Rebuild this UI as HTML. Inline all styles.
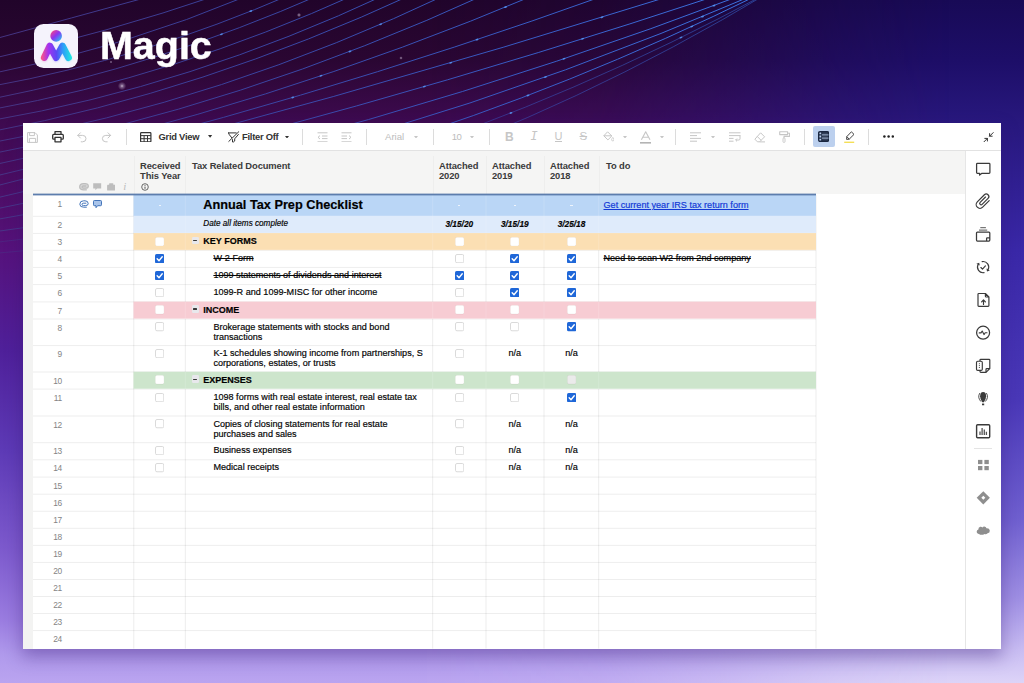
<!DOCTYPE html>
<html lang="en"><head><meta charset="utf-8"><title>Magic</title>
<style>
html,body{margin:0;padding:0}
body{width:1024px;height:683px;overflow:hidden;position:relative;font-family:"Liberation Sans",sans-serif;background:#2a0a40;}
.abs{position:absolute}
#bg{position:absolute;left:0;top:0;width:1024px;height:683px;
 background:linear-gradient(180deg,#180a56 0px,#1d0e68 60px,#28187e 123px,#3a28a8 250px,#4a38b8 400px,#7060d0 520px,#a090e4 600px,#c8bcf2 650px,#ddd4f8 683px);}
#bgl{position:absolute;left:0;top:0;width:1024px;height:683px;
 background:linear-gradient(180deg,#21042a 0px,#2a0632 60px,#3e0a50 123px,#4b0d62 180px,#56127c 250px,#4f209a 350px,#5d3ab6 450px,#7d5acd 550px,#9a7ce0 620px,#b09aec 655px,#baa4f0 683px);
 -webkit-mask-image:linear-gradient(90deg,#000 0px,#000 420px,rgba(0,0,0,.85) 600px,rgba(0,0,0,.55) 720px,rgba(0,0,0,.2) 840px,rgba(0,0,0,0) 950px);
 mask-image:linear-gradient(90deg,#000 0px,#000 420px,rgba(0,0,0,.85) 600px,rgba(0,0,0,.55) 720px,rgba(0,0,0,.2) 840px,rgba(0,0,0,0) 950px);}
#panel{position:absolute;left:23px;top:123px;width:978px;height:526px;background:#fff;box-shadow:0 7px 16px 1px rgba(50,20,110,.36)}
#toolbar{position:absolute;left:0;top:0;width:978px;height:27px;background:#fff;border-bottom:1px solid #e2e2e2;box-sizing:content-box}
#hdr{position:absolute;left:0;top:28px;width:942px;height:43px;background:#f5f5f4}
#gut{position:absolute;left:0;top:71px;width:10px;height:455px;background:#f3f3f2}
#side{position:absolute;left:942px;top:28px;width:36px;height:498px;background:#fff;border-left:1px solid #e6e6e6;box-sizing:border-box}
.h{position:absolute;font-weight:bold;font-size:9.4px;line-height:10.3px;color:#3b3b3b;white-space:nowrap;letter-spacing:-0.1px}
.tb{position:absolute;font-weight:bold;font-size:9.4px;line-height:12px;color:#333;white-space:nowrap;letter-spacing:-0.26px}
.tg{position:absolute;font-size:9.6px;line-height:12px;color:#bdbdbd;white-space:nowrap}
.sep{position:absolute;top:6px;width:1px;height:16px;background:#dcdcdc}
.rn{position:absolute;left:21.6px;width:40px;text-align:right;font-size:8.4px;line-height:10px;color:#848484;letter-spacing:-0.45px}
.t{position:absolute;font-size:9.08px;line-height:10.2px;color:#050505;white-space:nowrap;-webkit-text-stroke:0.18px #050505}
.s{text-decoration:line-through}
.g{font-weight:bold;font-size:9.0px;color:#000}
.c{position:absolute;width:40px;text-align:center;font-size:9.08px;line-height:10.2px;color:#050505;-webkit-text-stroke:0.18px #050505}
.hl{position:absolute;height:1px;background:#e9e9e9}
.vl{position:absolute;width:1px;background:#e6e6e6}
</style></head><body>
<div id="bg"></div><div id="bgl"></div>

<svg class="abs" style="left:0;top:0" width="1024" height="683" viewBox="0 0 1024 683">
<defs><linearGradient id="ln" gradientUnits="userSpaceOnUse" x1="0" y1="0" x2="760" y2="0"><stop offset="0" stop-color="#48388a"/><stop offset=".3" stop-color="#3c48a8"/><stop offset=".7" stop-color="#3a66d6"/><stop offset="1" stop-color="#4080f4"/></linearGradient></defs>
<g fill="none" stroke="url(#ln)" stroke-width="1" opacity="0.9">
<path d="M-8.0 39.7 Q71.5 17.9 151.0 -3.8"/>
<path d="M-8.0 58.6 Q106.0 33.3 220.0 -5.7"/>
<path d="M-8.0 73.6 Q121.8 48.4 251.5 -5.8"/>
<path d="M-8.0 86.2 Q142.0 59.0 292.0 -6.0"/>
<path d="M-8.0 98.9 Q157.0 66.3 322.0 -6.1"/>
<path d="M-8.0 109.5 Q174.5 76.5 357.0 -6.3"/>
<path d="M-8.0 120.4 Q190.0 86.3 388.0 -6.5"/>
<path d="M-8.0 131.5 Q203.0 91.5 414.0 -6.4"/>
<path d="M-8.0 142.6 Q221.5 101.6 451.0 -7.6"/>
<path d="M-8.0 153.7 Q240.5 107.0 489.0 -7.2"/>
<path d="M-8.0 165.2 Q265.5 108.6 539.0 -6.8"/>
<path d="M-8.0 176.9 Q300.5 104.9 609.0 -6.1"/>
<path d="M-8.0 187.0 Q333.2 102.3 674.5 -5.3"/>
<path d="M-8.0 199.0 Q356.5 115.3 721.0 -5.8"/>
<path d="M-8.0 209.7 Q368.5 137.3 745.0 -6.1"/>
<path d="M-8.0 220.3 Q374.3 158.8 756.6 -6.2"/>
<path d="M-8.0 232.1 Q377.0 182.8 762.0 -7.0"/>
<path d="M-8.0 242.8 Q380.0 202.1 768.0 -7.3" opacity=".5"/>
<path d="M-8.0 253.6 Q381.5 225.4 771.0 -8.7" opacity=".5"/>
</g>
<ellipse cx="250.8" cy="11.1" rx="1.5" ry="0.85" fill="#5b9af6" opacity=".8" transform="rotate(-18 250.8 11.1)"/>
<ellipse cx="221.5" cy="34.3" rx="1.5" ry="0.85" fill="#5b9af6" opacity=".8" transform="rotate(-18 221.5 34.3)"/>
<ellipse cx="380.7" cy="24.3" rx="1.5" ry="0.85" fill="#5b9af6" opacity=".8" transform="rotate(-18 380.7 24.3)"/>
<ellipse cx="350" cy="51.4" rx="1.5" ry="0.85" fill="#5b9af6" opacity=".8" transform="rotate(-18 350 51.4)"/>
<ellipse cx="321" cy="75.8" rx="1.5" ry="0.85" fill="#5b9af6" opacity=".8" transform="rotate(-18 321 75.8)"/>
<ellipse cx="292.8" cy="97.4" rx="1.5" ry="0.85" fill="#5b9af6" opacity=".8" transform="rotate(-18 292.8 97.4)"/>
<ellipse cx="505.5" cy="7.1" rx="1.5" ry="0.85" fill="#5b9af6" opacity=".8" transform="rotate(-18 505.5 7.1)"/>
<ellipse cx="477" cy="39.6" rx="1.5" ry="0.85" fill="#5b9af6" opacity=".8" transform="rotate(-18 477 39.6)"/>
<ellipse cx="450.8" cy="62.8" rx="1.5" ry="0.85" fill="#5b9af6" opacity=".8" transform="rotate(-18 450.8 62.8)"/>
<ellipse cx="424.4" cy="86.5" rx="1.5" ry="0.85" fill="#5b9af6" opacity=".8" transform="rotate(-18 424.4 86.5)"/>
<ellipse cx="582.6" cy="38.8" rx="1.5" ry="0.85" fill="#5b9af6" opacity=".8" transform="rotate(-18 582.6 38.8)"/>
<ellipse cx="564" cy="58.8" rx="1.5" ry="0.85" fill="#5b9af6" opacity=".8" transform="rotate(-18 564 58.8)"/>
<ellipse cx="545.5" cy="77.0" rx="1.5" ry="0.85" fill="#5b9af6" opacity=".8" transform="rotate(-18 545.5 77.0)"/>
<ellipse cx="528" cy="95.4" rx="1.5" ry="0.85" fill="#5b9af6" opacity=".8" transform="rotate(-18 528 95.4)"/>
<ellipse cx="511" cy="112.9" rx="1.5" ry="0.85" fill="#5b9af6" opacity=".8" transform="rotate(-18 511 112.9)"/>
<ellipse cx="602" cy="17.3" rx="1.5" ry="0.85" fill="#5b9af6" opacity=".8" transform="rotate(-18 602 17.3)"/>
<ellipse cx="714" cy="5.6" rx="1.5" ry="0.85" fill="#5b9af6" opacity=".8" transform="rotate(-18 714 5.6)"/>
<ellipse cx="702.5" cy="16.6" rx="1.5" ry="0.85" fill="#5b9af6" opacity=".8" transform="rotate(-18 702.5 16.6)"/>
<ellipse cx="691.8" cy="26.5" rx="1.5" ry="0.85" fill="#5b9af6" opacity=".8" transform="rotate(-18 691.8 26.5)"/>
<ellipse cx="681" cy="37.5" rx="1.5" ry="0.85" fill="#5b9af6" opacity=".8" transform="rotate(-18 681 37.5)"/>
<defs><radialGradient id="st"><stop offset="0" stop-color="#e8dcec" stop-opacity=".85"/><stop offset=".35" stop-color="#d0c0dc" stop-opacity=".45"/><stop offset="1" stop-color="#c0b0d0" stop-opacity="0"/></radialGradient></defs>
<circle cx="122" cy="86" r="4.2" fill="url(#st)"/>
<circle cx="299" cy="15" r="2.2" fill="url(#st)"/>
<circle cx="401" cy="58" r="1.8" fill="url(#st)"/>
<circle cx="111" cy="62" r="1.4" fill="url(#st)"/>
</svg>
<div class="abs" style="left:34.1px;top:23.8px;width:44.1px;height:44.1px;border-radius:9.5px;background:#f5f3fc"></div>
<svg class="abs" style="left:34.1px;top:23.8px" width="44.1" height="44.1" viewBox="0 0 44 44">
<defs><linearGradient id="lg" gradientUnits="userSpaceOnUse" x1="8" y1="0" x2="37" y2="0"><stop offset="0" stop-color="#f4528e"/><stop offset=".22" stop-color="#a432f0"/><stop offset=".5" stop-color="#5a48f4"/><stop offset=".72" stop-color="#2f9cf8"/><stop offset="1" stop-color="#1fe4e0"/></linearGradient>
<linearGradient id="lg2" x1="0.1" y1="0.1" x2="0.9" y2="0.95"><stop offset="0" stop-color="#f2408c"/><stop offset=".45" stop-color="#8a34f2"/><stop offset="1" stop-color="#22c8f2"/></linearGradient>
<filter id="gl" x="-20%" y="-20%" width="140%" height="150%"><feGaussianBlur stdDeviation="1.1"/></filter></defs>
<path d="M10.3 34.4 L15.8 22.6 L22.1 34.4 L28.4 22.6 L34.4 34.4" fill="none" stroke="url(#lg)" stroke-width="6" stroke-linecap="round" stroke-linejoin="round" opacity=".35" filter="url(#gl)"/>
<circle cx="22.1" cy="11.9" r="5.8" fill="url(#lg2)"/>
<path d="M10.3 33.5 L15.8 22 L22.1 33.5 L28.4 22 L34.4 33.5" fill="none" stroke="url(#lg)" stroke-width="6.8" stroke-linecap="round" stroke-linejoin="round"/>
</svg>
<div class="abs" style="left:100.3px;top:23.7px;font-weight:bold;font-size:38px;line-height:44px;color:#fff;transform:scaleX(1.038);transform-origin:0 0;white-space:nowrap;-webkit-text-stroke:0.5px #fff">Magic</div>

<div id="panel">
<div id="toolbar"></div><div id="hdr"></div><div id="gut"></div><div id="side"></div>
</div>
<svg class="abs" style="left:27px;top:131.5px" width="11" height="11" viewBox="0 0 11 11" ><path d="M0.6 0.6 H8 L10.4 3 V10.4 H0.6 Z M2.6 0.6 V3.6 H7.4 V0.6 M2.4 10.4 V6.4 H8.6 V10.4" fill="none" stroke="#c6c6c6" stroke-width="1"/></svg>
<svg class="abs" style="left:51.5px;top:131px" width="12" height="11.5" viewBox="0 0 12 11.5" ><path d="M3 3.4 V0.7 H9 V3.4 M3 8.2 H1.6 Q0.7 8.2 0.7 7.3 V4.4 Q0.7 3.4 1.6 3.4 H10.4 Q11.3 3.4 11.3 4.4 V7.3 Q11.3 8.2 10.4 8.2 H9 M3 6.4 H9 V10.8 H3 Z" fill="none" stroke="#333" stroke-width="1.3" stroke-linejoin="round"/></svg>
<svg class="abs" style="left:77px;top:131.5px" width="10" height="11" viewBox="0 0 10 11" ><path d="M0.8 3.4 H5.6 Q9 3.4 9 6.6 Q9 9.8 5.6 9.8 H4.2 M3.4 0.8 L0.8 3.4 L3.4 6" fill="none" stroke="#c6c6c6" stroke-width="1" stroke-linecap="round" stroke-linejoin="round"/></svg>
<svg class="abs" style="left:101px;top:131.5px" width="10.5" height="11" viewBox="0 0 10.5 11" ><path d="M9.6 3.4 H4.8 Q1.4 3.4 1.4 6.6 Q1.4 9.8 4.8 9.8 H6.2 M7 0.8 L9.6 3.4 L7 6" fill="none" stroke="#c6c6c6" stroke-width="1" stroke-linecap="round" stroke-linejoin="round"/></svg>
<div class="sep" style="left:126px;top:129px"></div>
<svg class="abs" style="left:140px;top:131.5px" width="11.5" height="10.5" viewBox="0 0 11.5 10.5" ><rect x="0.6" y="0.6" width="10.3" height="9.3" rx="0.8" fill="none" stroke="#333" stroke-width="1.2"/><path d="M0.6 3.6 H10.9 M0.6 6.7 H10.9 M4.1 3.6 V9.9 M7.5 3.6 V9.9" stroke="#333" stroke-width="1" fill="none"/></svg>
<div class="tb" style="left:158.5px;top:130.5px">Grid View</div>
<svg class="abs" style="left:208.4px;top:135px" width="4.2" height="2.8" viewBox="0 0 4.2 2.8" ><path d="M0 0 H4.2 L2.1 2.8 Z" fill="#333"/></svg>
<svg class="abs" style="left:228px;top:130.5px" width="11.5" height="12" viewBox="0 0 11.5 12" ><path d="M0.4 1.9 H8.2 M0.4 1.9 Q0.5 3.2 3.7 6.7 M10.4 3.5 L6.7 7.8 V10 Q5.8 11.3 4.5 11 V8.6" fill="none" stroke="#333" stroke-width="1" stroke-linecap="round" stroke-linejoin="round"/><path d="M0.8 10.4 L10.8 0.7" stroke="#333" stroke-width="1" stroke-linecap="round"/></svg>
<div class="tb" style="left:242px;top:130.5px">Filter Off</div>
<svg class="abs" style="left:284.5px;top:135.5px" width="4" height="2.6" viewBox="0 0 4 2.6" ><path d="M0 0 H4 L2 2.6 Z" fill="#333"/></svg>
<div class="sep" style="left:302px;top:129px"></div>
<svg class="abs" style="left:316.5px;top:131.5px" width="11" height="10.5" viewBox="0 0 11 10.5" ><path d="M0.5 0.8 H10.5 M5 4 H10.5 M5 6.6 H10.5 M0.5 9.8 H10.5 M3 3.6 L1 5.3 L3 7" fill="none" stroke="#c6c6c6" stroke-width="1"/></svg>
<svg class="abs" style="left:341px;top:131.5px" width="11" height="10.5" viewBox="0 0 11 10.5" ><path d="M0.5 0.8 H10.5 M0.5 4 H6 M0.5 6.6 H6 M0.5 9.8 H10.5 M8 3.6 L10 5.3 L8 7" fill="none" stroke="#c6c6c6" stroke-width="1"/></svg>
<div class="sep" style="left:366px;top:129px"></div>
<div class="tg" style="left:385px;top:130.5px">Arial</div>
<svg class="abs" style="left:413.5px;top:135.5px" width="4" height="2.6" viewBox="0 0 4 2.6" ><path d="M0 0 H4 L2 2.6 Z" fill="#c6c6c6"/></svg>
<div class="sep" style="left:432.5px;top:129px"></div>
<div class="tg" style="left:451.8px;top:130.5px;letter-spacing:-0.6px">10</div>
<svg class="abs" style="left:470px;top:135.5px" width="4" height="2.6" viewBox="0 0 4 2.6" ><path d="M0 0 H4 L2 2.6 Z" fill="#c6c6c6"/></svg>
<div class="sep" style="left:489px;top:129px"></div>
<div class="tg" style="left:505px;top:129.5px;font-size:12px;line-height:14px;font-weight:bold;color:#c6c6c6">B</div>
<div class="tg" style="left:530.2px;top:130.4px;font-size:12.4px;line-height:14px;font-style:italic;font-family:'Liberation Mono',monospace;color:#c6c6c6">I</div>
<div class="tg" style="left:554.5px;top:130px;font-size:11px;line-height:13px;color:#c6c6c6;border-bottom:1px solid #c6c6c6;height:11px">U</div>
<div class="tg" style="left:579.5px;top:130px;font-size:11.5px;line-height:13px;color:#c6c6c6;text-decoration:line-through">S</div>
<svg class="abs" style="left:602.5px;top:131px" width="11.5" height="11.5" viewBox="0 0 11.5 11.5" ><path d="M4.6 0.8 L8.8 5 L4.9 8.9 L0.8 4.8 Z M0.8 4.8 H8.6" fill="none" stroke="#c6c6c6" stroke-width="1" stroke-linejoin="round"/><path d="M9.8 6.4 Q11 8 11 8.8 Q11 9.9 9.8 9.9 Q8.6 9.9 8.6 8.8 Q8.6 8 9.8 6.4Z" fill="none" stroke="#c6c6c6" stroke-width="0.8"/></svg>
<svg class="abs" style="left:623px;top:135.5px" width="4" height="2.6" viewBox="0 0 4 2.6" ><path d="M0 0 H4 L2 2.6 Z" fill="#c6c6c6"/></svg>
<svg class="abs" style="left:639.5px;top:131px" width="11.5" height="13" viewBox="0 0 11.5 13" ><path d="M1.4 8.8 L5.7 0.8 L10 8.8 M2.8 6.2 H8.6" fill="none" stroke="#c6c6c6" stroke-width="1.1" stroke-linejoin="round"/><rect x="0" y="11" width="11.5" height="1.6" fill="#b4b4b4"/></svg>
<svg class="abs" style="left:659.5px;top:135.5px" width="4" height="2.6" viewBox="0 0 4 2.6" ><path d="M0 0 H4 L2 2.6 Z" fill="#c6c6c6"/></svg>
<div class="sep" style="left:675px;top:129px"></div>
<svg class="abs" style="left:690px;top:132px" width="11" height="10" viewBox="0 0 11 10" ><path d="M0 0.8 H11 M0 3.6 H7 M0 6.4 H11 M0 9.2 H7" fill="none" stroke="#c6c6c6" stroke-width="1"/></svg>
<svg class="abs" style="left:710.8px;top:135.5px" width="4" height="2.6" viewBox="0 0 4 2.6" ><path d="M0 0 H4 L2 2.6 Z" fill="#c6c6c6"/></svg>
<svg class="abs" style="left:729px;top:132px" width="11.5" height="10" viewBox="0 0 11.5 10" ><path d="M0 0.8 H11.5 M0 3.6 H11.5 M0 6.4 H4.5 M0 9.2 H4.5 M11 3.6 V6.8 Q11 8 9.8 8 H6.8 M8 6.6 L6.6 8 L8 9.4" fill="none" stroke="#c6c6c6" stroke-width="1"/></svg>
<svg class="abs" style="left:754px;top:131.5px" width="11.5" height="11" viewBox="0 0 11.5 11" ><path d="M6.6 0.8 L10.6 4.8 L5.6 9.8 H3.4 L0.9 7.2 Z M3.2 4.4 L7.2 8.4 M5.6 9.9 H11" fill="none" stroke="#c6c6c6" stroke-width="1" stroke-linejoin="round"/></svg>
<svg class="abs" style="left:778.5px;top:131px" width="11.5" height="12" viewBox="0 0 11.5 12" ><path d="M0.7 0.8 H8.6 V3.6 H0.7 Z M8.6 2.2 H10.6 V5.4 H5 V7" fill="none" stroke="#c6c6c6" stroke-width="1.1" stroke-linejoin="round"/><rect x="4" y="7" width="2" height="4.4" rx="0.8" fill="none" stroke="#c6c6c6" stroke-width="0.9"/></svg>
<div class="sep" style="left:803.5px;top:129px"></div>
<div class="abs" style="left:813px;top:126px;width:21.5px;height:21px;border-radius:2px;background:#bcd0ee"></div>
<svg class="abs" style="left:818.2px;top:131px" width="11.2" height="11" viewBox="0 0 11.2 11" ><rect x="0.7" y="0.7" width="9.8" height="9.6" rx="1.2" fill="none" stroke="#1a2740" stroke-width="1.4"/><path d="M0.7 3.9 H10.5 M0.7 7.1 H10.5 M3.8 0.7 V10.3" stroke="#1a2740" stroke-width="1.1" fill="none"/><rect x="3.8" y="0.7" width="6.7" height="9.6" fill="#1a2740" opacity="0.85"/><path d="M3.8 3.9 H10.5 M3.8 7.1 H10.5" stroke="#bcd0ee" stroke-width="0.9"/></svg>
<svg class="abs" style="left:843.5px;top:130.5px" width="11" height="12.5" viewBox="0 0 11 12.5" ><path d="M7.4 0.8 L10 3.4 L5.2 8.2 L2.6 8.4 L2.8 5.6 Z M2.8 5.6 L5.2 8.2" fill="none" stroke="#444" stroke-width="1" stroke-linejoin="round"/><rect x="0.2" y="10.6" width="10" height="1.5" fill="#f4df57"/></svg>
<div class="sep" style="left:868px;top:129px"></div>
<svg class="abs" style="left:882.5px;top:135.2px" width="11.5" height="3" viewBox="0 0 11.5 3" ><circle cx="1.4" cy="1.5" r="1.25" fill="#222"/><circle cx="5.6" cy="1.5" r="1.25" fill="#222"/><circle cx="9.8" cy="1.5" r="1.25" fill="#222"/></svg>
<svg class="abs" style="left:982.5px;top:131.5px" width="11" height="10.5" viewBox="0 0 11 10.5" ><path d="M10.2 0.6 L6.6 4.2 M6.6 1.6 V4.2 H9.2 M0.8 10 L4.4 6.4 M4.4 9 V6.4 H1.8" fill="none" stroke="#333" stroke-width="1" stroke-linecap="round" stroke-linejoin="round"/></svg>
<div class="h" style="left:140px;top:160.5px">Received<br>This Year</div>
<svg class="abs" style="left:140.5px;top:182.5px" width="8" height="8" viewBox="0 0 8 8" ><circle cx="4" cy="4" r="3.3" fill="none" stroke="#444" stroke-width="0.8"/><path d="M4 3.6 V5.8" stroke="#444" stroke-width="0.9"/><circle cx="4" cy="2.4" r="0.5" fill="#444"/></svg>
<div class="h" style="left:192px;top:160.5px">Tax Related Document</div>
<div class="h" style="left:439px;top:160.5px">Attached<br>2020</div>
<div class="h" style="left:492px;top:160.5px">Attached<br>2019</div>
<div class="h" style="left:550px;top:160.5px">Attached<br>2018</div>
<div class="h" style="left:606px;top:160.5px">To do</div>
<div class="vl" style="left:133.8px;top:156px;height:38px;background:#eeeeed"></div>
<div class="vl" style="left:185.3px;top:156px;height:38px;background:#eeeeed"></div>
<div class="vl" style="left:432.7px;top:156px;height:38px;background:#eeeeed"></div>
<div class="vl" style="left:486.0px;top:156px;height:38px;background:#eeeeed"></div>
<div class="vl" style="left:544.0px;top:156px;height:38px;background:#eeeeed"></div>
<div class="vl" style="left:598.7px;top:156px;height:38px;background:#eeeeed"></div>
<svg class="abs" style="left:79px;top:183.2px" width="10" height="7.6" viewBox="0 0 10 7.6" ><path d="M6.9 3 H4.4 Q3 3 3 4.1 Q3 5.2 4.4 5.2 H6.6 Q9.3 5.2 9.3 3.3 Q9.3 0.7 6 0.7 H4.6 Q0.7 0.7 0.7 3.9 Q0.7 6.8 4.6 6.8 H7.4" fill="#d9d9d9" stroke="#bdbdbd" stroke-width="1.3" stroke-linecap="round"/></svg>
<svg class="abs" style="left:93.4px;top:183.3px" width="8.4" height="7.6" viewBox="0 0 8.4 7.6" ><path d="M0.2 0.2 H8.2 V5.4 H4 L2.4 7.3 V5.4 H0.2 Z" fill="#bdbdbd"/></svg>
<svg class="abs" style="left:107px;top:183.3px" width="8.4" height="7.6" viewBox="0 0 8.4 7.6" ><rect x="0.1" y="1.7" width="8.2" height="5.7" rx="0.5" fill="#bdbdbd"/><rect x="2.1" y="0.2" width="4.2" height="2" rx="0.5" fill="#bdbdbd"/></svg>
<div class="abs" style="left:123.2px;top:180.6px;font-family:'Liberation Serif',serif;font-style:italic;font-size:11px;line-height:11px;color:#bdbdbd">i</div>
<svg class="abs" style="left:0;top:0" width="1024" height="683" viewBox="0 0 1024 683" shape-rendering="geometricPrecision"><rect x="133.30" y="195.30" width="1" height="453.30" fill="#000" opacity="0.075"/><rect x="184.80" y="195.30" width="1" height="453.30" fill="#000" opacity="0.075"/><rect x="432.20" y="195.30" width="1" height="453.30" fill="#000" opacity="0.075"/><rect x="485.50" y="195.30" width="1" height="453.30" fill="#000" opacity="0.075"/><rect x="543.50" y="195.30" width="1" height="453.30" fill="#000" opacity="0.075"/><rect x="598.20" y="195.30" width="1" height="453.30" fill="#000" opacity="0.075"/><rect x="815.50" y="195.30" width="1" height="453.30" fill="#000" opacity="0.075"/><rect x="33.0" y="215.80" width="783.0" height="1" fill="#000" opacity="0.07"/><rect x="33.0" y="232.90" width="783.0" height="1" fill="#000" opacity="0.07"/><rect x="33.0" y="249.80" width="783.0" height="1" fill="#000" opacity="0.07"/><rect x="33.0" y="266.90" width="783.0" height="1" fill="#000" opacity="0.07"/><rect x="33.0" y="284.10" width="783.0" height="1" fill="#000" opacity="0.07"/><rect x="33.0" y="301.40" width="783.0" height="1" fill="#000" opacity="0.07"/><rect x="33.0" y="318.50" width="783.0" height="1" fill="#000" opacity="0.07"/><rect x="33.0" y="345.10" width="783.0" height="1" fill="#000" opacity="0.07"/><rect x="33.0" y="371.50" width="783.0" height="1" fill="#000" opacity="0.07"/><rect x="33.0" y="388.60" width="783.0" height="1" fill="#000" opacity="0.07"/><rect x="33.0" y="415.50" width="783.0" height="1" fill="#000" opacity="0.07"/><rect x="33.0" y="442.20" width="783.0" height="1" fill="#000" opacity="0.07"/><rect x="33.0" y="459.30" width="783.0" height="1" fill="#000" opacity="0.07"/><rect x="33.0" y="476.60" width="783.0" height="1" fill="#000" opacity="0.07"/><rect x="33.0" y="493.70" width="783.0" height="1" fill="#000" opacity="0.07"/><rect x="33.0" y="510.75" width="783.0" height="1" fill="#000" opacity="0.07"/><rect x="33.0" y="527.80" width="783.0" height="1" fill="#000" opacity="0.07"/><rect x="33.0" y="544.85" width="783.0" height="1" fill="#000" opacity="0.07"/><rect x="33.0" y="561.90" width="783.0" height="1" fill="#000" opacity="0.07"/><rect x="33.0" y="578.95" width="783.0" height="1" fill="#000" opacity="0.07"/><rect x="33.0" y="596.00" width="783.0" height="1" fill="#000" opacity="0.07"/><rect x="33.0" y="613.05" width="783.0" height="1" fill="#000" opacity="0.07"/><rect x="33.0" y="630.10" width="783.0" height="1" fill="#000" opacity="0.07"/><rect x="133.50" y="195.00" width="682.50" height="21.10" fill="#bad6f6"/><rect x="184.80" y="195.30" width="1" height="21.00" fill="#fff" opacity="0.15"/><rect x="432.20" y="195.30" width="1" height="21.00" fill="#fff" opacity="0.15"/><rect x="485.50" y="195.30" width="1" height="21.00" fill="#fff" opacity="0.15"/><rect x="543.50" y="195.30" width="1" height="21.00" fill="#fff" opacity="0.15"/><rect x="598.20" y="195.30" width="1" height="21.00" fill="#fff" opacity="0.15"/><rect x="133.8" y="215.60" width="682.20" height="0.8" fill="#fff" opacity="0.3"/><rect x="133.50" y="216.00" width="682.50" height="17.20" fill="#dfebfb"/><rect x="184.80" y="216.30" width="1" height="17.10" fill="#fff" opacity="0.15"/><rect x="432.20" y="216.30" width="1" height="17.10" fill="#fff" opacity="0.15"/><rect x="485.50" y="216.30" width="1" height="17.10" fill="#fff" opacity="0.15"/><rect x="543.50" y="216.30" width="1" height="17.10" fill="#fff" opacity="0.15"/><rect x="598.20" y="216.30" width="1" height="17.10" fill="#fff" opacity="0.15"/><rect x="133.8" y="232.70" width="682.20" height="0.8" fill="#fff" opacity="0.3"/><rect x="133.50" y="233.10" width="682.50" height="17.00" fill="#fbdfb3"/><rect x="184.80" y="233.40" width="1" height="16.90" fill="#fff" opacity="0.15"/><rect x="432.20" y="233.40" width="1" height="16.90" fill="#fff" opacity="0.15"/><rect x="485.50" y="233.40" width="1" height="16.90" fill="#fff" opacity="0.15"/><rect x="543.50" y="233.40" width="1" height="16.90" fill="#fff" opacity="0.15"/><rect x="598.20" y="233.40" width="1" height="16.90" fill="#fff" opacity="0.15"/><rect x="133.8" y="249.60" width="682.20" height="0.8" fill="#fff" opacity="0.3"/><rect x="133.50" y="301.60" width="682.50" height="17.20" fill="#f7ccd3"/><rect x="184.80" y="301.90" width="1" height="17.10" fill="#fff" opacity="0.15"/><rect x="432.20" y="301.90" width="1" height="17.10" fill="#fff" opacity="0.15"/><rect x="485.50" y="301.90" width="1" height="17.10" fill="#fff" opacity="0.15"/><rect x="543.50" y="301.90" width="1" height="17.10" fill="#fff" opacity="0.15"/><rect x="598.20" y="301.90" width="1" height="17.10" fill="#fff" opacity="0.15"/><rect x="133.8" y="318.30" width="682.20" height="0.8" fill="#fff" opacity="0.3"/><rect x="133.50" y="371.70" width="682.50" height="17.20" fill="#cde5cc"/><rect x="184.80" y="372.00" width="1" height="17.10" fill="#fff" opacity="0.15"/><rect x="432.20" y="372.00" width="1" height="17.10" fill="#fff" opacity="0.15"/><rect x="485.50" y="372.00" width="1" height="17.10" fill="#fff" opacity="0.15"/><rect x="543.50" y="372.00" width="1" height="17.10" fill="#fff" opacity="0.15"/><rect x="598.20" y="372.00" width="1" height="17.10" fill="#fff" opacity="0.15"/><rect x="133.8" y="388.40" width="682.20" height="0.8" fill="#fff" opacity="0.3"/><rect x="33" y="193.6" width="783" height="1.8" fill="#5d7dad"/></svg>
<div class="rn" style="top:198.90px">1</div>
<div class="t" style="left:203.3px;top:197.80px;font-weight:bold;font-size:12.73px;line-height:14px;color:#000">Annual Tax Prep Checklist</div>
<a class="t" style="left:603.5px;top:200.30px;color:#1238d6;-webkit-text-stroke:0.18px #1238d6;text-decoration:underline;font-size:9.1px">Get current year IRS tax return form</a>
<div class="abs" style="left:158.6px;top:205.0px;width:2.4px;height:1px;background:#eef4fc"></div>
<div class="abs" style="left:458.1px;top:205.0px;width:2.4px;height:1px;background:#eef4fc"></div>
<div class="abs" style="left:513.6px;top:205.0px;width:2.4px;height:1px;background:#eef4fc"></div>
<div class="abs" style="left:570.3px;top:205.0px;width:2.4px;height:1px;background:#eef4fc"></div>
<svg class="abs" style="left:79px;top:200px" width="10" height="8" viewBox="0 0 10 8" ><path d="M6.9 3.2 H4.4 Q3 3.2 3 4.4 Q3 5.6 4.4 5.6 H6.6 Q9.2 5.6 9.2 3.6 Q9.2 0.8 6 0.8 H4.6 Q0.8 0.8 0.8 4.2 Q0.8 7.2 4.6 7.2 H7.4" fill="none" stroke="#3a6eb6" stroke-width="0.95" stroke-linecap="round"/></svg>
<svg class="abs" style="left:93.2px;top:200.2px" width="9" height="8.4" viewBox="0 0 9 8.4" ><path d="M1.4 0.5 H7.6 Q8.5 0.5 8.5 1.4 V4.8 Q8.5 5.7 7.6 5.7 H4.6 L3 7.7 V5.7 H1.4 Q0.5 5.7 0.5 4.8 V1.4 Q0.5 0.5 1.4 0.5 Z" fill="#a9c4ea" stroke="#3a6eb6" stroke-width="0.95" stroke-linejoin="round"/></svg>
<div class="rn" style="top:219.90px">2</div>
<div class="t" style="left:203.3px;top:219.10px;font-style:italic;font-size:8.17px">Date all items complete</div>
<div class="c" style="left:439.3px;top:218.60px;font-weight:bold;font-style:italic;font-size:8.3px;line-height:10.2px">3/15/20</div>
<div class="c" style="left:494.8px;top:218.60px;font-weight:bold;font-style:italic;font-size:8.3px;line-height:10.2px">3/15/19</div>
<div class="c" style="left:551.5px;top:218.60px;font-weight:bold;font-style:italic;font-size:8.3px;line-height:10.2px">3/25/18</div>
<div class="rn" style="top:237.00px">3</div>
<div class="abs" style="left:191.7px;top:236.80px;width:7.2px;height:7.5px;background:#e8e8ec;border-radius:1.3px"></div><div class="abs" style="left:193.1px;top:239.95px;width:4.2px;height:1.15px;background:#3a3a3a;border-radius:.5px"></div>
<div class="t g" style="left:203.3px;top:236.00px">KEY FORMS</div>
<svg class="abs" style="left:155.15px;top:236.85px" width="9.3" height="9.3" viewBox="0 0 10 10"><rect x="0.3" y="0.3" width="9.4" height="9.4" rx="1.7" fill="#ffffff" stroke="rgba(120,100,80,.13)" stroke-width="0.6"/></svg>
<svg class="abs" style="left:454.65px;top:236.85px" width="9.3" height="9.3" viewBox="0 0 10 10"><rect x="0.3" y="0.3" width="9.4" height="9.4" rx="1.7" fill="#ffffff" stroke="rgba(120,100,80,.13)" stroke-width="0.6"/></svg>
<svg class="abs" style="left:510.15px;top:236.85px" width="9.3" height="9.3" viewBox="0 0 10 10"><rect x="0.3" y="0.3" width="9.4" height="9.4" rx="1.7" fill="#ffffff" stroke="rgba(120,100,80,.13)" stroke-width="0.6"/></svg>
<svg class="abs" style="left:566.85px;top:236.85px" width="9.3" height="9.3" viewBox="0 0 10 10"><rect x="0.3" y="0.3" width="9.4" height="9.4" rx="1.7" fill="#ffffff" stroke="rgba(120,100,80,.13)" stroke-width="0.6"/></svg>
<div class="rn" style="top:253.90px">4</div>
<div class="t s" style="left:213.4px;top:252.90px">W-2 Form</div>
<div class="t s" style="left:603.5px;top:252.90px">Need to scan W2 from 2nd company</div>
<svg class="abs" style="left:155.15px;top:253.75px" width="9.3" height="9.3" viewBox="0 0 10 10"><rect x="0" y="0" width="10" height="10" rx="1.7" fill="#1f67d8"/><path d="M2.3 5.2 L4.3 7.2 L7.8 3" fill="none" stroke="#fff" stroke-width="1.5" stroke-linecap="round" stroke-linejoin="round"/></svg>
<svg class="abs" style="left:454.65px;top:253.75px" width="9.3" height="9.3" viewBox="0 0 10 10"><rect x="0.55" y="0.55" width="8.9" height="8.9" rx="1.6" fill="#fff" stroke="#d9d9d9" stroke-width="1.05"/></svg>
<svg class="abs" style="left:510.15px;top:253.75px" width="9.3" height="9.3" viewBox="0 0 10 10"><rect x="0" y="0" width="10" height="10" rx="1.7" fill="#1f67d8"/><path d="M2.3 5.2 L4.3 7.2 L7.8 3" fill="none" stroke="#fff" stroke-width="1.5" stroke-linecap="round" stroke-linejoin="round"/></svg>
<svg class="abs" style="left:566.85px;top:253.75px" width="9.3" height="9.3" viewBox="0 0 10 10"><rect x="0" y="0" width="10" height="10" rx="1.7" fill="#1f67d8"/><path d="M2.3 5.2 L4.3 7.2 L7.8 3" fill="none" stroke="#fff" stroke-width="1.5" stroke-linecap="round" stroke-linejoin="round"/></svg>
<div class="rn" style="top:271.00px">5</div>
<div class="t s" style="left:213.4px;top:270.00px">1099 statements of dividends and interest</div>
<svg class="abs" style="left:155.15px;top:270.85px" width="9.3" height="9.3" viewBox="0 0 10 10"><rect x="0" y="0" width="10" height="10" rx="1.7" fill="#1f67d8"/><path d="M2.3 5.2 L4.3 7.2 L7.8 3" fill="none" stroke="#fff" stroke-width="1.5" stroke-linecap="round" stroke-linejoin="round"/></svg>
<svg class="abs" style="left:454.65px;top:270.85px" width="9.3" height="9.3" viewBox="0 0 10 10"><rect x="0" y="0" width="10" height="10" rx="1.7" fill="#1f67d8"/><path d="M2.3 5.2 L4.3 7.2 L7.8 3" fill="none" stroke="#fff" stroke-width="1.5" stroke-linecap="round" stroke-linejoin="round"/></svg>
<svg class="abs" style="left:510.15px;top:270.85px" width="9.3" height="9.3" viewBox="0 0 10 10"><rect x="0" y="0" width="10" height="10" rx="1.7" fill="#1f67d8"/><path d="M2.3 5.2 L4.3 7.2 L7.8 3" fill="none" stroke="#fff" stroke-width="1.5" stroke-linecap="round" stroke-linejoin="round"/></svg>
<svg class="abs" style="left:566.85px;top:270.85px" width="9.3" height="9.3" viewBox="0 0 10 10"><rect x="0" y="0" width="10" height="10" rx="1.7" fill="#1f67d8"/><path d="M2.3 5.2 L4.3 7.2 L7.8 3" fill="none" stroke="#fff" stroke-width="1.5" stroke-linecap="round" stroke-linejoin="round"/></svg>
<div class="rn" style="top:288.20px">6</div>
<div class="t" style="left:213.4px;top:287.20px">1099-R and 1099-MISC for other income</div>
<svg class="abs" style="left:155.15px;top:288.05px" width="9.3" height="9.3" viewBox="0 0 10 10"><rect x="0.55" y="0.55" width="8.9" height="8.9" rx="1.6" fill="#fff" stroke="#d9d9d9" stroke-width="1.05"/></svg>
<svg class="abs" style="left:454.65px;top:288.05px" width="9.3" height="9.3" viewBox="0 0 10 10"><rect x="0.55" y="0.55" width="8.9" height="8.9" rx="1.6" fill="#fff" stroke="#d9d9d9" stroke-width="1.05"/></svg>
<svg class="abs" style="left:510.15px;top:288.05px" width="9.3" height="9.3" viewBox="0 0 10 10"><rect x="0" y="0" width="10" height="10" rx="1.7" fill="#1f67d8"/><path d="M2.3 5.2 L4.3 7.2 L7.8 3" fill="none" stroke="#fff" stroke-width="1.5" stroke-linecap="round" stroke-linejoin="round"/></svg>
<svg class="abs" style="left:566.85px;top:288.05px" width="9.3" height="9.3" viewBox="0 0 10 10"><rect x="0" y="0" width="10" height="10" rx="1.7" fill="#1f67d8"/><path d="M2.3 5.2 L4.3 7.2 L7.8 3" fill="none" stroke="#fff" stroke-width="1.5" stroke-linecap="round" stroke-linejoin="round"/></svg>
<div class="rn" style="top:305.50px">7</div>
<div class="abs" style="left:191.7px;top:305.30px;width:7.2px;height:7.5px;background:#e8e8ec;border-radius:1.3px"></div><div class="abs" style="left:193.1px;top:308.45px;width:4.2px;height:1.15px;background:#3a3a3a;border-radius:.5px"></div>
<div class="t g" style="left:203.3px;top:304.50px">INCOME</div>
<svg class="abs" style="left:155.15px;top:305.35px" width="9.3" height="9.3" viewBox="0 0 10 10"><rect x="0.3" y="0.3" width="9.4" height="9.4" rx="1.7" fill="#ffffff" stroke="rgba(120,100,80,.13)" stroke-width="0.6"/></svg>
<svg class="abs" style="left:454.65px;top:305.35px" width="9.3" height="9.3" viewBox="0 0 10 10"><rect x="0.3" y="0.3" width="9.4" height="9.4" rx="1.7" fill="#ffffff" stroke="rgba(120,100,80,.13)" stroke-width="0.6"/></svg>
<svg class="abs" style="left:510.15px;top:305.35px" width="9.3" height="9.3" viewBox="0 0 10 10"><rect x="0.3" y="0.3" width="9.4" height="9.4" rx="1.7" fill="#ffffff" stroke="rgba(120,100,80,.13)" stroke-width="0.6"/></svg>
<svg class="abs" style="left:566.85px;top:305.35px" width="9.3" height="9.3" viewBox="0 0 10 10"><rect x="0.3" y="0.3" width="9.4" height="9.4" rx="1.7" fill="#ffffff" stroke="rgba(120,100,80,.13)" stroke-width="0.6"/></svg>
<div class="rn" style="top:322.60px">8</div>
<div class="t" style="left:213.4px;top:321.60px">Brokerage statements with stocks and bond<br>transactions</div>
<svg class="abs" style="left:155.15px;top:322.45px" width="9.3" height="9.3" viewBox="0 0 10 10"><rect x="0.55" y="0.55" width="8.9" height="8.9" rx="1.6" fill="#fff" stroke="#d9d9d9" stroke-width="1.05"/></svg>
<svg class="abs" style="left:454.65px;top:322.45px" width="9.3" height="9.3" viewBox="0 0 10 10"><rect x="0.55" y="0.55" width="8.9" height="8.9" rx="1.6" fill="#fff" stroke="#d9d9d9" stroke-width="1.05"/></svg>
<svg class="abs" style="left:510.15px;top:322.45px" width="9.3" height="9.3" viewBox="0 0 10 10"><rect x="0.55" y="0.55" width="8.9" height="8.9" rx="1.6" fill="#fff" stroke="#d9d9d9" stroke-width="1.05"/></svg>
<svg class="abs" style="left:566.85px;top:322.45px" width="9.3" height="9.3" viewBox="0 0 10 10"><rect x="0" y="0" width="10" height="10" rx="1.7" fill="#1f67d8"/><path d="M2.3 5.2 L4.3 7.2 L7.8 3" fill="none" stroke="#fff" stroke-width="1.5" stroke-linecap="round" stroke-linejoin="round"/></svg>
<div class="rn" style="top:349.20px">9</div>
<div class="t" style="left:213.4px;top:348.20px">K-1 schedules showing income from partnerships, S<br>corporations, estates, or trusts</div>
<svg class="abs" style="left:155.15px;top:349.05px" width="9.3" height="9.3" viewBox="0 0 10 10"><rect x="0.55" y="0.55" width="8.9" height="8.9" rx="1.6" fill="#fff" stroke="#d9d9d9" stroke-width="1.05"/></svg>
<svg class="abs" style="left:454.65px;top:349.05px" width="9.3" height="9.3" viewBox="0 0 10 10"><rect x="0.55" y="0.55" width="8.9" height="8.9" rx="1.6" fill="#fff" stroke="#d9d9d9" stroke-width="1.05"/></svg>
<div class="c" style="left:494.8px;top:348.20px">n/a</div>
<div class="c" style="left:551.5px;top:348.20px">n/a</div>
<div class="rn" style="top:375.60px">10</div>
<div class="abs" style="left:191.7px;top:375.40px;width:7.2px;height:7.5px;background:#e8e8ec;border-radius:1.3px"></div><div class="abs" style="left:193.1px;top:378.55px;width:4.2px;height:1.15px;background:#3a3a3a;border-radius:.5px"></div>
<div class="t g" style="left:203.3px;top:374.60px">EXPENSES</div>
<svg class="abs" style="left:155.15px;top:375.45px" width="9.3" height="9.3" viewBox="0 0 10 10"><rect x="0.3" y="0.3" width="9.4" height="9.4" rx="1.7" fill="#ffffff" stroke="rgba(120,100,80,.13)" stroke-width="0.6"/></svg>
<svg class="abs" style="left:454.65px;top:375.45px" width="9.3" height="9.3" viewBox="0 0 10 10"><rect x="0.3" y="0.3" width="9.4" height="9.4" rx="1.7" fill="#ffffff" stroke="rgba(120,100,80,.13)" stroke-width="0.6"/></svg>
<svg class="abs" style="left:510.15px;top:375.45px" width="9.3" height="9.3" viewBox="0 0 10 10"><rect x="0.3" y="0.3" width="9.4" height="9.4" rx="1.7" fill="#ffffff" stroke="rgba(120,100,80,.13)" stroke-width="0.6"/></svg>
<svg class="abs" style="left:566.85px;top:375.45px" width="9.3" height="9.3" viewBox="0 0 10 10"><rect x="0.3" y="0.3" width="9.4" height="9.4" rx="1.7" fill="#ebebeb" stroke="rgba(120,100,80,.13)" stroke-width="0.6"/></svg>
<div class="rn" style="top:392.70px">11</div>
<div class="t" style="left:213.4px;top:391.70px">1098 forms with real estate interest, real estate tax<br>bills, and other real estate information</div>
<svg class="abs" style="left:155.15px;top:392.55px" width="9.3" height="9.3" viewBox="0 0 10 10"><rect x="0.55" y="0.55" width="8.9" height="8.9" rx="1.6" fill="#fff" stroke="#d9d9d9" stroke-width="1.05"/></svg>
<svg class="abs" style="left:454.65px;top:392.55px" width="9.3" height="9.3" viewBox="0 0 10 10"><rect x="0.55" y="0.55" width="8.9" height="8.9" rx="1.6" fill="#fff" stroke="#d9d9d9" stroke-width="1.05"/></svg>
<svg class="abs" style="left:510.15px;top:392.55px" width="9.3" height="9.3" viewBox="0 0 10 10"><rect x="0.55" y="0.55" width="8.9" height="8.9" rx="1.6" fill="#fff" stroke="#d9d9d9" stroke-width="1.05"/></svg>
<svg class="abs" style="left:566.85px;top:392.55px" width="9.3" height="9.3" viewBox="0 0 10 10"><rect x="0" y="0" width="10" height="10" rx="1.7" fill="#1f67d8"/><path d="M2.3 5.2 L4.3 7.2 L7.8 3" fill="none" stroke="#fff" stroke-width="1.5" stroke-linecap="round" stroke-linejoin="round"/></svg>
<div class="rn" style="top:419.60px">12</div>
<div class="t" style="left:213.4px;top:418.60px">Copies of closing statements for real estate<br>purchases and sales</div>
<svg class="abs" style="left:155.15px;top:419.45px" width="9.3" height="9.3" viewBox="0 0 10 10"><rect x="0.55" y="0.55" width="8.9" height="8.9" rx="1.6" fill="#fff" stroke="#d9d9d9" stroke-width="1.05"/></svg>
<svg class="abs" style="left:454.65px;top:419.45px" width="9.3" height="9.3" viewBox="0 0 10 10"><rect x="0.55" y="0.55" width="8.9" height="8.9" rx="1.6" fill="#fff" stroke="#d9d9d9" stroke-width="1.05"/></svg>
<div class="c" style="left:494.8px;top:418.60px">n/a</div>
<div class="c" style="left:551.5px;top:418.60px">n/a</div>
<div class="rn" style="top:446.30px">13</div>
<div class="t" style="left:213.4px;top:445.30px">Business expenses</div>
<svg class="abs" style="left:155.15px;top:446.15px" width="9.3" height="9.3" viewBox="0 0 10 10"><rect x="0.55" y="0.55" width="8.9" height="8.9" rx="1.6" fill="#fff" stroke="#d9d9d9" stroke-width="1.05"/></svg>
<svg class="abs" style="left:454.65px;top:446.15px" width="9.3" height="9.3" viewBox="0 0 10 10"><rect x="0.55" y="0.55" width="8.9" height="8.9" rx="1.6" fill="#fff" stroke="#d9d9d9" stroke-width="1.05"/></svg>
<div class="c" style="left:494.8px;top:445.30px">n/a</div>
<div class="c" style="left:551.5px;top:445.30px">n/a</div>
<div class="rn" style="top:463.40px">14</div>
<div class="t" style="left:213.4px;top:462.40px">Medical receipts</div>
<svg class="abs" style="left:155.15px;top:463.25px" width="9.3" height="9.3" viewBox="0 0 10 10"><rect x="0.55" y="0.55" width="8.9" height="8.9" rx="1.6" fill="#fff" stroke="#d9d9d9" stroke-width="1.05"/></svg>
<svg class="abs" style="left:454.65px;top:463.25px" width="9.3" height="9.3" viewBox="0 0 10 10"><rect x="0.55" y="0.55" width="8.9" height="8.9" rx="1.6" fill="#fff" stroke="#d9d9d9" stroke-width="1.05"/></svg>
<div class="c" style="left:494.8px;top:462.40px">n/a</div>
<div class="c" style="left:551.5px;top:462.40px">n/a</div>
<div class="rn" style="top:480.70px">15</div>
<div class="rn" style="top:497.80px">16</div>
<div class="rn" style="top:514.85px">17</div>
<div class="rn" style="top:531.90px">18</div>
<div class="rn" style="top:548.95px">19</div>
<div class="rn" style="top:566.00px">20</div>
<div class="rn" style="top:583.05px">21</div>
<div class="rn" style="top:600.10px">22</div>
<div class="rn" style="top:617.15px">23</div>
<div class="rn" style="top:634.20px">24</div>
<svg class="abs" style="left:965px;top:150px" width="36" height="400" viewBox="965 150 36 400" fill="none" stroke-linejoin="round" stroke-linecap="round"><path d="M977.4 163.4 H989.1 Q989.9 163.4 989.9 164.2 V172.6 Q989.9 173.4 989.1 173.4 H981.6 L979.6 175 V173.4 H977.4 Q976.6 173.4 976.6 172.6 V164.2 Q976.6 163.4 977.4 163.4 Z" stroke="#3a3a3a" stroke-width="1.25"/><g transform="translate(983.1 201.4) rotate(45) scale(0.80) translate(-12.5 -12)"><path d="M17.25 6 V17.5 A4.75 4.75 0 0 1 7.75 17.5 V5 A3.25 3.25 0 0 1 14.25 5 V15.5 A1.75 1.75 0 0 1 10.75 15.5 V6" stroke="#3a3a3a" stroke-width="1.5"/></g><path d="M980.3 227.7 H985.9 M979 230.1 H987.2" stroke="#3a3a3a" stroke-width="0.85" stroke-linecap="butt"/><path d="M977.4 232.2 H988.9 Q989.8 232.2 989.8 233.1 V240.1 Q989.8 241 988.9 241 H977.4 Q976.5 241 976.5 240.1 V233.1 Q976.5 232.2 977.4 232.2 Z M986.6 241 V238.4 Q986.6 237.8 987.2 237.8 H989.8" stroke="#3a3a3a" stroke-width="1.25"/><path d="M982.13 261.59 A5.6 5.6 0 0 1 987.95 269.90" stroke="#3a3a3a" stroke-width="1.15"/><path d="M987.00 271.55 L989.80 270.50 L986.50 268.60 Z" fill="#3a3a3a" stroke="none"/><path d="M984.07 272.61 A5.6 5.6 0 0 1 978.25 264.30" stroke="#3a3a3a" stroke-width="1.15"/><path d="M979.20 262.65 L976.40 263.70 L979.70 265.60 Z" fill="#3a3a3a" stroke="none"/><path d="M980.9 267.5 L982.5 269.1 L985.4 265.9" stroke="#3a3a3a" stroke-width="1.15"/><path d="M978.8 293.5 H985.4 L988.9 297 V305.6 Q988.9 306.4 988.1 306.4 H978.8 Q978 306.4 978 305.6 V294.3 Q978 293.5 978.8 293.5 Z M985.4 293.5 V296.2 Q985.4 297 986.2 297 H988.9" stroke="#3a3a3a" stroke-width="1.2"/><path d="M983.5 304.4 V300.4 M981.6 301.9 L983.5 300 L985.4 301.9" stroke="#3a3a3a" stroke-width="1.2"/><circle cx="983.1" cy="332.7" r="6.5" stroke="#3a3a3a" stroke-width="1.25"/><path d="M979.2 332.9 H981 L982.2 331 L984 334.6 L985.2 332.7 H987" stroke="#3a3a3a" stroke-width="1.1"/><path d="M980.8 359.3 H989 Q989.8 359.3 989.8 360.1 V368.6 L986 372.4 H980.8 Q980 372.4 980 371.6 V370.4 M980 361.2 V360.1 Q980 359.3 980.8 359.3 M989.8 368.6 H986.8 Q986 368.6 986 369.4 V372.4" stroke="#3a3a3a" stroke-width="1.2"/><rect x="976.5" y="361.2" width="5.8" height="9.2" rx="1.2" stroke="#3a3a3a" stroke-width="1.15" fill="#fff"/><path d="M979.4 363.2 V368.6" stroke="#3a3a3a" stroke-width="0.9" stroke-dasharray="1 0.9" stroke-linecap="butt"/><path d="M983.1 391.9 Q986.1 391.9 986.1 396.2 Q986.1 399.4 983.9 402.2 H982.3 Q980.1 399.4 980.1 396.2 Q980.1 391.9 983.1 391.9 Z" fill="#3a3a3a" stroke="none"/><path d="M979.6 393.4 Q977.2 397.4 980.6 401.2 M986.6 393.4 Q989 397.4 985.6 401.2" stroke="#3a3a3a" stroke-width="0.9"/><path d="M982 404.4 H984.2" stroke="#3a3a3a" stroke-width="1.7" stroke-linecap="butt"/><rect x="976.6" y="424.8" width="13.1" height="13" rx="1" stroke="#3a3a3a" stroke-width="1.4"/><path d="M980 434.9 V431.4 M982.1 434.9 V428 M984.3 434.9 V429.6 M986.4 434.9 V431.8" stroke="#555" stroke-width="1.3" stroke-linecap="butt"/><path d="M974 448.5 H992" stroke="#e4e4e4" stroke-width="1" stroke-linecap="butt"/><rect x="978" y="459.9" width="4.4" height="4.2" fill="#8e8e8e" stroke="none"/><rect x="984.4" y="459.9" width="4.4" height="4.2" fill="#8e8e8e" stroke="none"/><rect x="978" y="466" width="4.4" height="4.2" fill="#8e8e8e" stroke="none"/><rect x="984.4" y="466" width="4.4" height="4.2" fill="#8e8e8e" stroke="none"/><path d="M983.3 491.2 L989.9 497.8 L983.3 504.4 L976.7 497.8 Z" fill="#8e8e8e" stroke="none"/><path d="M983.3 495.8 L985.3 497.8 L983.3 499.8 L981.3 497.8 Z" fill="#fff" stroke="none"/><path d="M979.4 534.2 Q976.6 534 976.7 531.6 Q976.8 529.8 978.4 529.5 Q978.2 527.2 980.2 526.7 Q981.6 526.4 982.5 527.5 Q983.4 526.2 985 526.7 Q986.2 527.1 986.4 528.3 Q989.4 528 989.8 530.4 Q990 532.8 987.6 533.2 Q986.2 534.8 984.2 533.9 Q983 535.2 981.3 534.7 Q980.2 534.8 979.4 534.2 Z" fill="#8e8e8e" stroke="none"/></svg>
</body></html>
